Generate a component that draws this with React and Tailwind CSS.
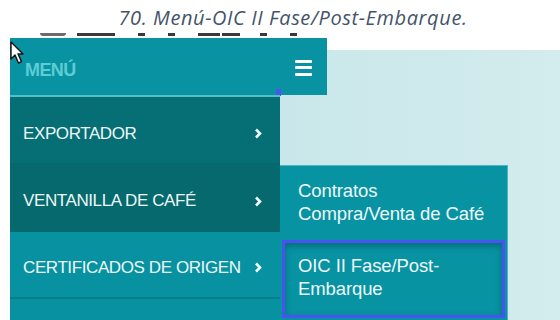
import React from "react";

const font = { fontFamily: '"Liberation Sans", Arial, sans-serif' };

function Chevron() {
  return (
    <svg width="8" height="11" viewBox="0 0 8 11" className="shrink-0">
      <path d="M2 1.5 L6 5.5 L2 9.5" fill="none" stroke="#f2fbfb" strokeWidth="2.6" />
    </svg>
  );
}

function Cursor() {
  return (
    <svg width="16" height="26" viewBox="0 0 16 26" className="absolute left-[-1px] top-[2px]">
      <path
        d="M2 2 L2 19 L6 15 L9.5 23 L12.5 21.6 L9 14 L14 14 Z"
        fill="#ffffff"
        stroke="#111111"
        strokeWidth="1.4"
        strokeLinejoin="round"
      />
    </svg>
  );
}

// bottoms of the clipped heading above the screenshot
const marks = [
  { l: 40, w: 26, r: true },
  { l: 77, w: 38 },
  { l: 138, w: 7 },
  { l: 168, w: 7 },
  { l: 198, w: 22 },
  { l: 222, w: 18 },
  { l: 260, w: 7 },
  { l: 290, w: 7 },
];

export default function App() {
  return (
    <div className="relative w-[560px] h-[320px] bg-white overflow-hidden flex flex-col" style={font}>
      {/* Caption */}
      <div className="h-[31px] flex items-center justify-center pl-[26px] pt-[4px]">
        <span
          className="italic text-[20px] text-[#44546a] tracking-[0.6px]"
          style={{ fontFamily: '"Open Sans", "Liberation Sans", sans-serif' }}
        >
          70. Menú-OIC II Fase/Post-Embarque.
        </span>
      </div>

      {/* clipped heading strokes */}
      <div className="relative h-[7px]">
        {marks.map((m, i) => (
          <div
            key={i}
            className={`absolute top-[2px] h-[3px] bg-[#3a3a3a] ${m.r ? "rounded-b-full bg-[#6b6b6b]" : ""}`}
            style={{ left: m.l, width: m.w }}
          />
        ))}
      </div>

      {/* Screenshot area */}
      <div className="relative ml-[10px] h-[282px] flex flex-col">
        {/* page behind the menu */}
        <div className="ml-[270px] mt-[12px] flex-1 bg-gradient-to-r from-[#c9e7ea] to-[#d3ecee]" />

        {/* Header */}
        <div className="absolute left-0 top-0 w-[317px] h-[57px] bg-[#0892a2] flex items-center justify-between pl-[15px] pr-[15px]">
          <span className="text-[18px] font-bold text-[#5ccdd5] tracking-[-0.6px] pt-[8px]">MENÚ</span>
          <div className="flex flex-col gap-[3.5px] pt-[2px]">
            <div className="w-[17px] h-[3px] bg-white rounded-[1px]" />
            <div className="w-[17px] h-[3px] bg-white rounded-[1px]" />
            <div className="w-[17px] h-[3px] bg-white rounded-[1px]" />
          </div>
        </div>
        <div className="absolute left-[266px] top-[51px] w-[5px] h-[7px] bg-[#4a55f0]" />

        {/* Sidebar */}
        <div className="absolute left-0 top-[57px] w-[270px] flex flex-col text-[#eef8f8] text-[17px] tracking-[-0.4px]">
          <div className="h-[2px] bg-[#4fc0c8]" />
          <div className="h-[66px] bg-[#066f75] flex items-center justify-between pl-[13px] pr-[18px] pt-[7px]">
            <span>EXPORTADOR</span>
            <Chevron />
          </div>
          <div className="h-[69px] bg-[#05696e] flex items-center justify-between pl-[13px] pr-[18px] pt-[7px]">
            <span>VENTANILLA DE CAFÉ</span>
            <Chevron />
          </div>
          <div className="h-[65px] bg-[#0892a1] flex items-center justify-between pl-[13px] pr-[18px] pt-[6px]">
            <span>CERTIFICADOS DE ORIGEN</span>
            <Chevron />
          </div>
          <div className="h-[2px] bg-[#077d87]" />
          <div className="h-[30px] bg-[#0892a1]" />
        </div>

        {/* Submenu */}
        <div className="absolute left-[270px] top-[127px] w-[228px] h-[160px] bg-[#0893a2] border-t border-r border-[#4fb6bf] text-[#eef8f8] text-[18.5px] leading-[23px] tracking-[-0.1px]">
          <div className="h-[74px] pl-[18px] pt-[13px]">
            Contratos
            <br />
            Compra/Venta de Café
          </div>
          <div className="ml-[2px] w-[223px] h-[78px] border-[3px] border-[#4a52f2] shadow-[inset_0_3px_6px_rgba(0,60,70,0.45)] pl-[13px] pt-[11px]">
            OIC II Fase/Post-
            <br />
            Embarque
          </div>
        </div>

        <Cursor />
      </div>
    </div>
  );
}
